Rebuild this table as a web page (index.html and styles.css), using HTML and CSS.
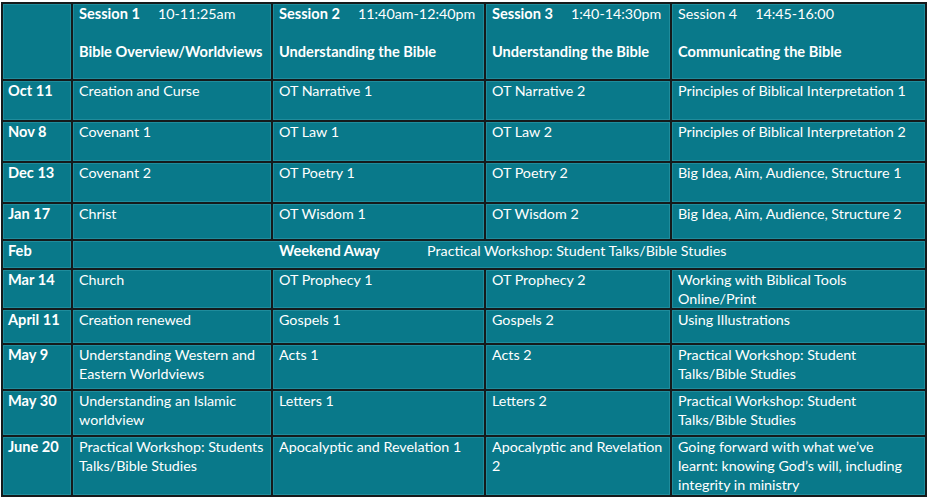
FILE: index.html
```html
<!DOCTYPE html>
<html lang="en">
<head>
<meta charset="utf-8">
<title>Course Schedule</title>
<link rel="stylesheet" href="styles.css">
</head>
<body>
<div class="schedule">
  <div class="cell"></div>
  <div class="cell head"><p><b>Session 1</b><span class="time">10-11:25am</span></p><p class="blank">&nbsp;</p><p><b>Bible Overview/Worldviews</b></p></div>
  <div class="cell head"><p><b>Session 2</b><span class="time">11:40am-12:40pm</span></p><p class="blank">&nbsp;</p><p><b>Understanding the Bible</b></p></div>
  <div class="cell head"><p><b>Session 3</b><span class="time">1:40-14:30pm</span></p><p class="blank">&nbsp;</p><p><b>Understanding the Bible</b></p></div>
  <div class="cell head"><p>Session 4<span class="time">14:45-16:00</span></p><p class="blank">&nbsp;</p><p><b>Communicating the Bible</b></p></div>

  <div class="cell date">Oct 11</div>
  <div class="cell">Creation and Curse</div>
  <div class="cell">OT Narrative 1</div>
  <div class="cell">OT Narrative 2</div>
  <div class="cell">Principles of Biblical Interpretation 1</div>

  <div class="cell date">Nov 8</div>
  <div class="cell">Covenant 1</div>
  <div class="cell">OT Law 1</div>
  <div class="cell">OT Law 2</div>
  <div class="cell">Principles of Biblical Interpretation 2</div>

  <div class="cell date">Dec 13</div>
  <div class="cell">Covenant 2</div>
  <div class="cell">OT Poetry 1</div>
  <div class="cell">OT Poetry 2</div>
  <div class="cell">Big Idea, Aim, Audience, Structure 1</div>

  <div class="cell date">Jan 17</div>
  <div class="cell">Christ</div>
  <div class="cell">OT Wisdom 1</div>
  <div class="cell">OT Wisdom 2</div>
  <div class="cell">Big Idea, Aim, Audience, Structure 2</div>

  <div class="cell date">Feb</div>
  <div class="cell span"><b>Weekend Away</b><span class="workshop">Practical Workshop: Student Talks/Bible Studies</span></div>

  <div class="cell date">Mar 14</div>
  <div class="cell">Church</div>
  <div class="cell">OT Prophecy 1</div>
  <div class="cell">OT Prophecy 2</div>
  <div class="cell">Working with Biblical Tools Online/Print</div>

  <div class="cell date">April 11</div>
  <div class="cell">Creation renewed</div>
  <div class="cell">Gospels 1</div>
  <div class="cell">Gospels 2</div>
  <div class="cell">Using Illustrations</div>

  <div class="cell date">May 9</div>
  <div class="cell">Understanding Western and Eastern Worldviews</div>
  <div class="cell">Acts 1</div>
  <div class="cell">Acts 2</div>
  <div class="cell">Practical Workshop: Student Talks/Bible Studies</div>

  <div class="cell date">May 30</div>
  <div class="cell">Understanding an Islamic worldview</div>
  <div class="cell">Letters 1</div>
  <div class="cell">Letters 2</div>
  <div class="cell">Practical Workshop: Student Talks/Bible Studies</div>

  <div class="cell date">June 20</div>
  <div class="cell">Practical Workshop: Students Talks/Bible Studies</div>
  <div class="cell">Apocalyptic and Revelation 1</div>
  <div class="cell">Apocalyptic and Revelation 2</div>
  <div class="cell">Going forward with what we’ve<br>learnt: knowing God’s will, including integrity in ministry</div>
</div>
</body>
</html>
```
FILE: styles.css
```css
html, body {
  margin: 0;
  padding: 0;
  background: #ffffff;
}

body {
  padding: 2px 0 0 1px;
  font-family: Lato, "Open Sans", sans-serif;
  font-size: 14.3px;
  line-height: 19px;
  color: #ffffff;
}

.schedule {
  display: grid;
  width: 922px;
  grid-template-columns: 68px 198px 211px 184px 253px;
  grid-template-rows: 75px 39px 39px 39px 35px 27px 38px 33px 44px 44px 58px;
  gap: 2px;
  border: 2px solid #151a1b;
  background: #151a1b;
}

.cell {
  background: #09798a;
  padding: 0 4px 0 6px;
  box-shadow: inset 0 0 0 1px #1f8c9c;
}

.cell p {
  margin: 0;
}

b {
  font-size: 14.6px;
}

.date {
  font-weight: 700;
  font-size: 14.6px;
  padding-left: 5px;
}

.time {
  margin-left: 18px;
}

.span {
  grid-column: 2 / 6;
  padding-left: 206px;
}

.workshop {
  margin-left: 47px;
}
```
